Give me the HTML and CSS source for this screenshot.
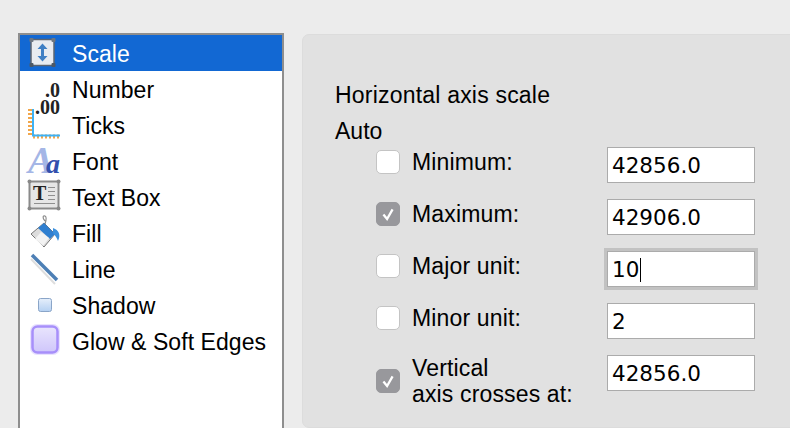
FILE: index.html
```html
<!DOCTYPE html>
<html lang="en">
<head>
  <meta charset="UTF-8" />
  <title>Format Axis</title>
  <link rel="stylesheet" href="styles.css">
</head>
<body>
  <ul class="sidebar">
    <li class="item selected">
      <svg class="icon" viewBox="0 0 36 36">
        <rect x="4" y="4.500" width="23" height="26" fill="#e8ebf0" stroke="#5c6470" stroke-width="1.500"/>
        <rect x="2.500" y="3" width="4" height="4" rx="1" fill="#6d7682"/>
        <rect x="24.500" y="3" width="4" height="4" rx="1" fill="#6d7682"/>
        <rect x="2.500" y="28" width="4" height="4" rx="1" fill="#4c5866"/>
        <rect x="24.500" y="28" width="4" height="4" rx="1" fill="#4c5866"/>
        <path d="M15.500 8.500l5 5.500h-3.500v7h3.500l-5 5.500-5-5.500h3.500v-7h-3.500z" fill="#3f7fc4"/>
      </svg>
      <span>Scale</span>
    </li>
    <li class="item">
      <svg class="icon" viewBox="0 0 36 36">
        <text class="num-glyph" text-anchor="end"><tspan x="33" y="26">.0</tspan><tspan x="33" y="43">.00</tspan></text>
      </svg>
      <span>Number</span>
    </li>
    <li class="item">
      <svg class="icon" viewBox="0 0 36 36">
        <path d="M3.500 2v27" stroke="#f2a64a" stroke-width="5" stroke-dasharray="2 2"/>
        <path d="M6 29.500h27" stroke="#f2a64a" stroke-width="4" stroke-dasharray="2 2"/>
        <path d="M6 2v26.500h27" fill="none" stroke="#3db2f5" stroke-width="2"/>
      </svg>
      <span>Ticks</span>
    </li>
    <li class="item">
      <svg class="icon" viewBox="0 0 36 36">
        <text class="font-big" x="1" y="30">A<tspan class="font-small" x="19">a</tspan></text>
      </svg>
      <span>Font</span>
    </li>
    <li class="item">
      <svg class="icon" viewBox="0 0 36 36">
        <rect x="2.500" y="2.500" width="29" height="27" fill="#e6e6e6" stroke="#8a8a8a" stroke-width="2"/>
        <circle cx="2.500" cy="2.500" r="2" fill="#888"/>
        <circle cx="31.500" cy="2.500" r="2" fill="#888"/>
        <circle cx="2.500" cy="29.500" r="2" fill="#888"/>
        <circle cx="31.500" cy="29.500" r="2" fill="#888"/>
        <text class="box-glyph" x="6" y="21">T</text>
        <path d="M21 8.500h7M21 12.500h7M21 16.500h7M21 20.500h7M7 24.500h21" stroke="#8f8f8f" stroke-width="1"/>
      </svg>
      <span>Text Box</span>
    </li>
    <li class="item">
      <svg class="icon" viewBox="0 0 36 36">
        <path d="M18 6c-3-3-2-6 0-5 2 1 1 5 0 8" fill="none" stroke="#8c8c8c" stroke-width="1.200"/>
        <path d="M4 19L17 8l11 11-11 13z" fill="#dcdcdc" stroke="#777" stroke-width="1"/>
        <path d="M11 13l6-5 11 11-5 5z" fill="#2f7fd0"/>
        <path d="M8 24l8 7 6-8-8-6z" fill="#f3f3f3"/>
        <path d="M26 13c6 2 8 7 5 13-1-3-3-6-5-8z" fill="#3b8fdc"/>
      </svg>
      <span>Fill</span>
    </li>
    <li class="item">
      <svg class="icon" viewBox="0 0 36 36">
        <path d="M5 6l24 25" stroke="#dedede" stroke-width="2" transform="translate(-1 2)"/>
        <path d="M5 4l25 25" stroke="#4d7fb5" stroke-width="3.500"/>
      </svg>
      <span>Line</span>
    </li>
    <li class="item">
      <svg class="icon" viewBox="0 0 36 36">
        <defs>
          <linearGradient id="shadowFill" x1="0" y1="0" x2="0" y2="1">
            <stop offset="0" stop-color="#e6effb"/>
            <stop offset="1" stop-color="#b4d0f2"/>
          </linearGradient>
        </defs>
        <rect x="11.500" y="11.500" width="13" height="13" rx="2" fill="url(#shadowFill)" stroke="#8aa5c8"/>
      </svg>
      <span>Shadow</span>
    </li>
    <li class="item">
      <svg class="icon" viewBox="0 0 36 36">
        <defs>
          <linearGradient id="glowFill" x1="0" y1="0" x2="0" y2="1">
            <stop offset="0" stop-color="#e9e5fd"/>
            <stop offset="1" stop-color="#cfc6fb"/>
          </linearGradient>
        </defs>
        <rect x="3" y="1" width="30" height="31" rx="7" fill="#e8e2fe"/>
        <rect x="5.500" y="3.500" width="25" height="26" rx="5" fill="url(#glowFill)" stroke="#a78ffa" stroke-width="2.500"/>
      </svg>
      <span>Glow &amp; Soft Edges</span>
    </li>
  </ul>

  <main class="panel">
    <h2 class="heading">Horizontal axis scale</h2>
    <p class="subheading">Auto</p>
    <div class="rows">
      <div class="row">
        <div class="choice">
          <span class="check"></span>
          <label>Minimum:</label>
        </div>
        <div class="field">42856.0</div>
      </div>
      <div class="row">
        <div class="choice">
          <span class="check on"><svg viewBox="0 0 24 24"><path d="M7 12.500l4 5 6-10.500" fill="none" stroke="#fff" stroke-width="2.500"/></svg></span>
          <label>Maximum:</label>
        </div>
        <div class="field">42906.0</div>
      </div>
      <div class="row">
        <div class="choice">
          <span class="check"></span>
          <label>Major unit:</label>
        </div>
        <div class="field focused">10<span class="caret"></span></div>
      </div>
      <div class="row">
        <div class="choice">
          <span class="check"></span>
          <label>Minor unit:</label>
        </div>
        <div class="field">2</div>
      </div>
      <div class="row">
        <div class="choice tall">
          <span class="check on"><svg viewBox="0 0 24 24"><path d="M7 12.500l4 5 6-10.500" fill="none" stroke="#fff" stroke-width="2.500"/></svg></span>
          <label>Vertical<br>axis crosses at:</label>
        </div>
        <div class="field">42856.0</div>
      </div>
    </div>
  </main>
</body>
</html>
```

FILE: styles.css
```css
html, body {
  height: 100%;
}
body {
  margin: 0;
  padding: 33px 0 0 18px;
  box-sizing: border-box;
  display: flex;
  overflow: hidden;
  background-color: #ececec;
  color: #000;
  font-family: 'Liberation Sans', sans-serif;
  font-size: 23px;
}
.sidebar {
  width: 266px;
  height: 395px;
  flex-shrink: 0;
  margin: 0;
  padding: 0;
  box-sizing: border-box;
  list-style: none;
  background-color: #fff;
  border: 2px solid #8e8e8e;
  border-bottom: none;
}
.item {
  display: flex;
  align-items: center;
  gap: 9px;
  height: 36px;
  padding-left: 7px;
}
.item span {
  padding-top: 2px;
  letter-spacing: 0.06px;
}
.item.selected {
  background-color: #1268d3;
  color: #fff;
}
.icon {
  width: 36px;
  height: 36px;
  flex-shrink: 0;
  overflow: visible;
}
.num-glyph {
  font-family: 'Liberation Serif', serif;
  font-weight: 700;
  font-size: 20px;
  fill: #222;
}
.font-big {
  font-family: 'Liberation Serif', serif;
  font-style: italic;
  font-weight: 700;
  font-size: 38px;
  fill: #a4b6e6;
}
.font-small {
  font-size: 28px;
  fill: #3350ad;
}
.box-glyph {
  font-family: 'Liberation Serif', serif;
  font-weight: 700;
  font-size: 20px;
  fill: #222;
}
.panel {
  flex: 1;
  height: 394px;
  margin: 1px -20px 0 18px;
  padding: 42px 0 0 32px;
  box-sizing: border-box;
  background-color: #e1e1e1;
  border: 1px solid #dcdcdc;
  border-radius: 7px;
}
.heading,
.subheading {
  margin: 0;
  font-size: 23px;
  font-weight: 400;
  line-height: 36px;
}
.heading {
  letter-spacing: 0.2px;
}
.rows {
  display: flex;
  flex-direction: column;
  gap: 16px;
  margin-top: -2px;
  margin-left: 41px;
}
.row {
  display: flex;
  align-items: flex-start;
  min-height: 36px;
}
.choice {
  width: 231px;
  display: flex;
  align-items: center;
  gap: 12px;
  padding-top: 2px;
  line-height: 26px;
  letter-spacing: 0.15px;
}
.choice.tall {
  padding-top: 0;
}
.check {
  width: 24px;
  height: 24px;
  flex-shrink: 0;
  box-sizing: border-box;
  background-color: #fff;
  border: 1px solid #c4c4c4;
  border-radius: 5px;
}
.check.on {
  background-color: #98989c;
  border-color: #98989c;
}
.check svg {
  display: block;
  width: 22px;
  height: 22px;
}
.field {
  width: 148px;
  height: 36px;
  box-sizing: border-box;
  padding-left: 4px;
  background-color: #fff;
  border: 1px solid #ababab;
  font-family: 'DejaVu Sans', sans-serif;
  font-size: 21.5px;
  line-height: 36px;
}
.field.focused {
  box-shadow: 0 0 0 3px #c2c2c2;
}
.caret {
  display: inline-block;
  width: 1px;
  height: 24px;
  margin-left: 1px;
  vertical-align: -5px;
  background-color: #000;
}
```
